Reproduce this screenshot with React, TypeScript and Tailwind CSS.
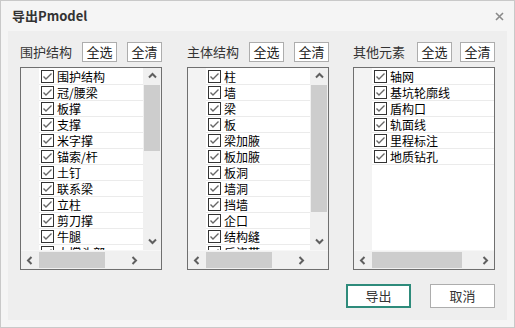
import React from "react";

const cjk = "font-['Noto_Sans_CJK_SC','Liberation_Sans',sans-serif]";

const Check: React.FC = () => (
  <svg width="13" height="13" viewBox="0 0 13 13" className="shrink-0">
    <rect x="0.5" y="0.5" width="12" height="12" fill="#fff" stroke="#333" />
    <polyline points="2.5,6.5 5,9 10.5,3.5" fill="none" stroke="#666" strokeWidth="1.4" />
  </svg>
);

const Chevron: React.FC<{ dir: "up" | "down" | "left" | "right" }> = ({ dir }) => {
  const pts = {
    up: "1,5.5 4.5,2 8,5.5",
    down: "1,2.5 4.5,6 8,2.5",
    left: "5.5,1 2,4.5 5.5,8",
    right: "2.5,1 6,4.5 2.5,8",
  }[dir];
  return (
    <svg width="9" height="9" viewBox="0 0 9 9">
      <polyline points={pts} fill="none" stroke="#5f5f5f" strokeWidth="2" />
    </svg>
  );
};

const SmallBtn: React.FC<{ text: string }> = ({ text }) => (
  <div className="flex h-5 w-[35px] items-center justify-center border border-[#adadad] bg-white text-[13px] text-[#222]">
    {text}
  </div>
);

type PanelProps = {
  title: string;
  items: string[];
  vscroll?: { thumbTop: number; thumbH: number };
  hthumb: number;
  gapBtn?: string;
};

const Panel: React.FC<PanelProps> = ({ title, items, vscroll, hthumb, gapBtn = "gap-[10px]" }) => (
  <div className="flex w-[142px] flex-col">
    <div className="flex h-5 items-center">
      <span className="text-[13px] text-[#333]">{title}</span>
      <div className={`ml-auto flex ${gapBtn}`}>
        <SmallBtn text="全选" />
        <SmallBtn text="全清" />
      </div>
    </div>
    <div className="mt-[5px] flex h-[203px] flex-col border border-[#6f6f6f] bg-white">
      <div className="flex h-[182px] overflow-hidden">
        <div className="w-[18px] shrink-0 bg-[#f3f3f3]" />
        <div className="flex-1 overflow-hidden pt-px">
          {items.map((t) => (
            <div key={t} className="flex h-4 items-center border-b border-[#ebebeb]">
              <div className="ml-[2px]">
                <Check />
              </div>
              <span className="ml-[3px] whitespace-nowrap text-[12px] leading-none text-black">{t}</span>
            </div>
          ))}
        </div>
        {vscroll && (
          <div className="flex w-[18px] shrink-0 flex-col bg-[#f0f0f0]">
            <div className="flex h-[17px] items-center justify-center">
              <Chevron dir="up" />
            </div>
            <div className="flex-1">
              <div
                className="ml-px w-4 bg-[#cdcdcd]"
                style={{ marginTop: vscroll.thumbTop, height: vscroll.thumbH }}
              />
            </div>
            <div className="flex h-[17px] items-center justify-center">
              <Chevron dir="down" />
            </div>
          </div>
        )}
      </div>
      <div className="h-px bg-[#f7f7f7]" />
      <div className="flex h-[18px] items-center bg-[#f0f0f0]">
        <div className="flex w-[18px] justify-center">
          <Chevron dir="left" />
        </div>
        <div className="h-4 bg-[#cdcdcd]" style={{ width: hthumb }} />
        <div className="flex-1" />
        <div className="flex w-[17px] justify-center">
          <Chevron dir="right" />
        </div>
        {vscroll && <div className="w-[18px]" />}
      </div>
    </div>
  </div>
);

const App: React.FC = () => {
  return (
    <div className={`h-[328px] w-[515px] border border-[#c9c9c9] bg-[#f5f5f5] ${cjk}`}>
      <div className="flex h-[30px] items-center pl-[11px] pr-[10px]">
        <span className="text-[13px] font-bold text-[#333]">导出Pmodel</span>
        <svg width="9" height="9" viewBox="0 0 9 9" className="ml-auto">
          <path d="M1 1 L8 8 M8 1 L1 8" stroke="#8a8a8a" strokeWidth="1.6" />
        </svg>
      </div>
      <div className="mx-[7px] h-[289px] bg-[#eeeeee] px-3 pt-[11px]">
        <div className="flex">
          <Panel
            title="围护结构"
            items={["围护结构", "冠/腰梁", "板撑", "支撑", "米字撑", "锚索/杆", "土钉", "联系梁", "立柱", "剪刀撑", "牛腿", "大撑头部"]}
            vscroll={{ thumbTop: 0, thumbH: 66 }}
            hthumb={66}
          />
          <div className="ml-[25px]">
            <Panel
              title="主体结构"
              items={["柱", "墙", "梁", "板", "梁加腋", "板加腋", "板洞", "墙洞", "挡墙", "企口", "结构缝", "后浇带"]}
              vscroll={{ thumbTop: 0, thumbH: 127 }}
              hthumb={66}
            />
          </div>
          <div className="ml-[24px]">
            <Panel
              title="其他元素"
              items={["轴网", "基坑轮廓线", "盾构口", "轨面线", "里程标注", "地质钻孔"]}
              hthumb={90}
              gapBtn="gap-[8px]"
            />
          </div>
        </div>
        <div className="mt-[14px] flex justify-end gap-[19px]">
          <div className="flex h-6 w-[65px] items-center justify-center border-2 border-[#2e8b7b] bg-white text-[13px] text-[#333]">
            导出
          </div>
          <div className="flex h-6 w-[65px] items-center justify-center border border-[#adadad] bg-white text-[13px] text-[#333]">
            取消
          </div>
        </div>
      </div>
    </div>
  );
};

export default App;
